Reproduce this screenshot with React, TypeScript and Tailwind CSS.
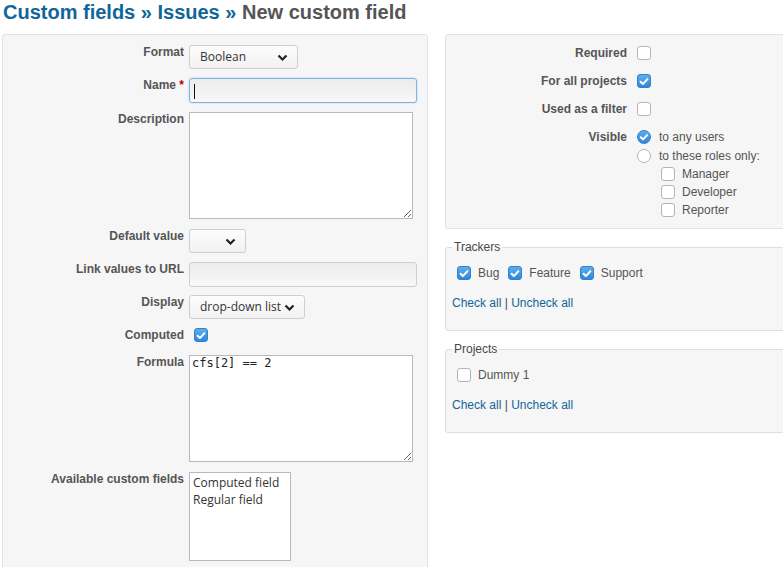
import React from "react";
import clsx from "clsx";

const sans = { fontFamily: '"Liberation Sans", Arial, sans-serif' };

const Check = ({ on }: { on?: boolean }) => (
  <span
    className={clsx(
      "flex h-[14px] w-[14px] shrink-0 items-center justify-center rounded-[3px] border",
      on ? "border-[#2c82cc] bg-linear-to-b from-[#5eaeee] to-[#2f88d6]" : "border-[#b5b5b5] bg-white"
    )}
  >
    {on && (
      <svg viewBox="0 0 14 14" className="h-[13px] w-[13px]">
        <path d="M3 7.3l2.7 2.7 5.3-5.7" fill="none" stroke="#fff" strokeWidth={2.3} strokeLinecap="round" strokeLinejoin="round" />
      </svg>
    )}
  </span>
);

const Radio = ({ on }: { on?: boolean }) => (
  <span
    className={clsx(
      "flex h-[14px] w-[14px] shrink-0 items-center justify-center rounded-full border",
      on ? "border-[#2c82cc] bg-linear-to-b from-[#5eaeee] to-[#2f88d6]" : "border-[#b5b5b5] bg-white"
    )}
  >
    {on && (
      <svg viewBox="0 0 14 14" className="h-[12px] w-[12px]">
        <path d="M3.3 7.3l2.5 2.5 4.9-5.1" fill="none" stroke="#fff" strokeWidth={2.2} strokeLinecap="round" strokeLinejoin="round" />
      </svg>
    )}
  </span>
);

const Select = ({ value, w }: { value: string; w: string }) => (
  <div
    className={clsx(
      "flex h-[24px] items-center justify-between rounded-[3px] border border-[#cfcfcf] bg-linear-to-b from-[#fdfdfd] to-[#f2f2f2] pl-[10px] pr-[9px] text-[12px] text-[#333]",
      w
    )}
    style={{ fontFamily: '"Open Sans", "Noto Sans", sans-serif' }}
  >
    <span>{value}</span>
    <svg viewBox="0 0 11 7" className="h-[7px] w-[11px]">
      <path d="M1.5 1.5l4 4 4-4" fill="none" stroke="#222" strokeWidth={2.2} />
    </svg>
  </div>
);

const Label = ({ children }: { children: React.ReactNode }) => (
  <div className="w-[181px] shrink-0 text-right text-[12px] font-bold leading-[14px] text-[#555]">{children}</div>
);

const Row = ({ label, children, className }: { label: React.ReactNode; children: React.ReactNode; className?: string }) => (
  <div className={clsx("flex items-start gap-[5px]", className)}>
    <Label>{label}</Label>
    {children}
  </div>
);

const Box = ({ title, children }: { title: string; children: React.ReactNode }) => (
  <fieldset className="mt-[11px] rounded-[3px] border border-[#dedede] bg-[#f6f6f6] px-[6px] pb-[20px] pt-[10px]">
    <legend className="px-[2px] text-[12px] leading-[14px] text-[#484848]">{title}</legend>
    {children}
    <div className="mt-[14px] text-[12px] leading-[14px] text-[#484848]">
      <span className="text-[#169]">Check all</span> | <span className="text-[#169]">Uncheck all</span>
    </div>
  </fieldset>
);

const Opt = ({ label, on }: { label: string; on?: boolean }) => (
  <span className="flex items-center">
    <span className="ml-[5px] flex">
      <Check on={on} />
    </span>
    <span className="ml-[7px]">{label}</span>
  </span>
);

export default function App() {
  return (
    <div className="relative h-[567px] w-[783px] overflow-hidden bg-white px-[2px]" style={sans}>
      <h2 className="ml-[1px] text-[20px] font-bold leading-[24px] text-[#555]">
        <span className="text-[#169]">Custom fields » Issues » </span>New custom field
      </h2>

      <div className="mt-[10px] flex items-start gap-[17px]">
        {/* left box */}
        <div className="h-[560px] w-[426px] shrink-0 rounded-[3px] border border-[#e2e2e2] bg-[#f6f6f6] pt-[10px]">
          <Row label="Format">
            <Select value="Boolean" w="w-[109px]" />
          </Row>
          <Row
            className="mt-[9px]"
            label={
              <>
                Name <span className="text-[#bb0000]">*</span>
              </>
            }
          >
            <div className="relative h-[25px] w-[228px] rounded-[3px] border border-[#7cb5e2] bg-linear-to-b from-[#ececec] to-[#f8f8f8] shadow-[0_0_2px_rgba(80,150,220,0.45)]">
              <span className="absolute left-[4px] top-[5px] h-[15px] w-px bg-[#111]" />
            </div>
          </Row>
          <Row className="mt-[9px]" label="Description">
            <textarea className="block h-[107px] w-[224px] border border-[#b9b9b9] bg-white" readOnly />
          </Row>
          <Row className="mt-[10px]" label="Default value">
            <Select value="" w="w-[57px]" />
          </Row>
          <Row className="mt-[9px]" label="Link values to URL">
            <div className="h-[25px] w-[228px] rounded-[3px] border border-[#cfcfcf] bg-linear-to-b from-[#ececec] to-[#f8f8f8]" />
          </Row>
          <Row className="mt-[8px]" label="Display">
            <Select value="drop-down list" w="w-[116px]" />
          </Row>
          <Row className="mt-[9px] h-[18px]" label="Computed">
            <span className="ml-[5px] flex">
              <Check on />
            </span>
          </Row>
          <Row className="mt-[9px]" label="Formula">
            <textarea
              className="block h-[107px] w-[224px] border border-[#b9b9b9] bg-white px-[2px] pt-0 text-[12px] leading-[14px] text-[#222]"
              style={{ fontFamily: '"DejaVu Sans Mono", "Liberation Mono", monospace' }}
              defaultValue="cfs[2] == 2"
              readOnly
            />
          </Row>
          <Row className="mt-[10px]" label="Available custom fields">
            <div
              className="h-[89px] w-[102px] border border-[#b9b9b9] bg-white pl-[3px] pt-[1px] text-[12px] leading-[17px] text-[#333]"
              style={{ fontFamily: '"Open Sans", "Noto Sans", sans-serif' }}
            >
              <div>Computed field</div>
              <div>Regular field</div>
            </div>
          </Row>
        </div>

        {/* right column */}
        <div className="w-[360px] shrink-0">
          <div className="rounded-[3px] border border-[#e2e2e2] bg-[#f6f6f6] pb-[7px] pt-[11px]">
            <Row className="h-[28px]" label="Required">
              <span className="ml-[5px] flex">
                <Check />
              </span>
            </Row>
            <Row className="h-[28px]" label="For all projects">
              <span className="ml-[5px] flex">
                <Check on />
              </span>
            </Row>
            <Row className="h-[28px]" label="Used as a filter">
              <span className="ml-[5px] flex">
                <Check />
              </span>
            </Row>
            <Row label="Visible">
              <div className="ml-[5px] text-[12px] leading-[14px] text-[#555]">
                <div className="flex h-[19px] items-start gap-[8px]">
                  <Radio on />
                  <span>to any users</span>
                </div>
                <div className="flex h-[18px] items-start gap-[8px]">
                  <Radio />
                  <span>to these roles only:</span>
                </div>
                {["Manager", "Developer", "Reporter"].map((r) => (
                  <div key={r} className="ml-[24px] flex h-[18px] items-start gap-[7px]">
                    <Check />
                    <span>{r}</span>
                  </div>
                ))}
              </div>
            </Row>
          </div>

          <Box title="Trackers">
            <div className="flex h-[18px] items-center text-[12px] text-[#555]">
              <Opt label="Bug" on />
              <span className="ml-[4px]" />
              <Opt label="Feature" on />
              <span className="ml-[4px]" />
              <Opt label="Support" on />
            </div>
          </Box>
          <Box title="Projects">
            <div className="flex h-[18px] items-center text-[12px] text-[#555]">
              <Opt label="Dummy 1" />
            </div>
          </Box>
        </div>
      </div>
    </div>
  );
}
